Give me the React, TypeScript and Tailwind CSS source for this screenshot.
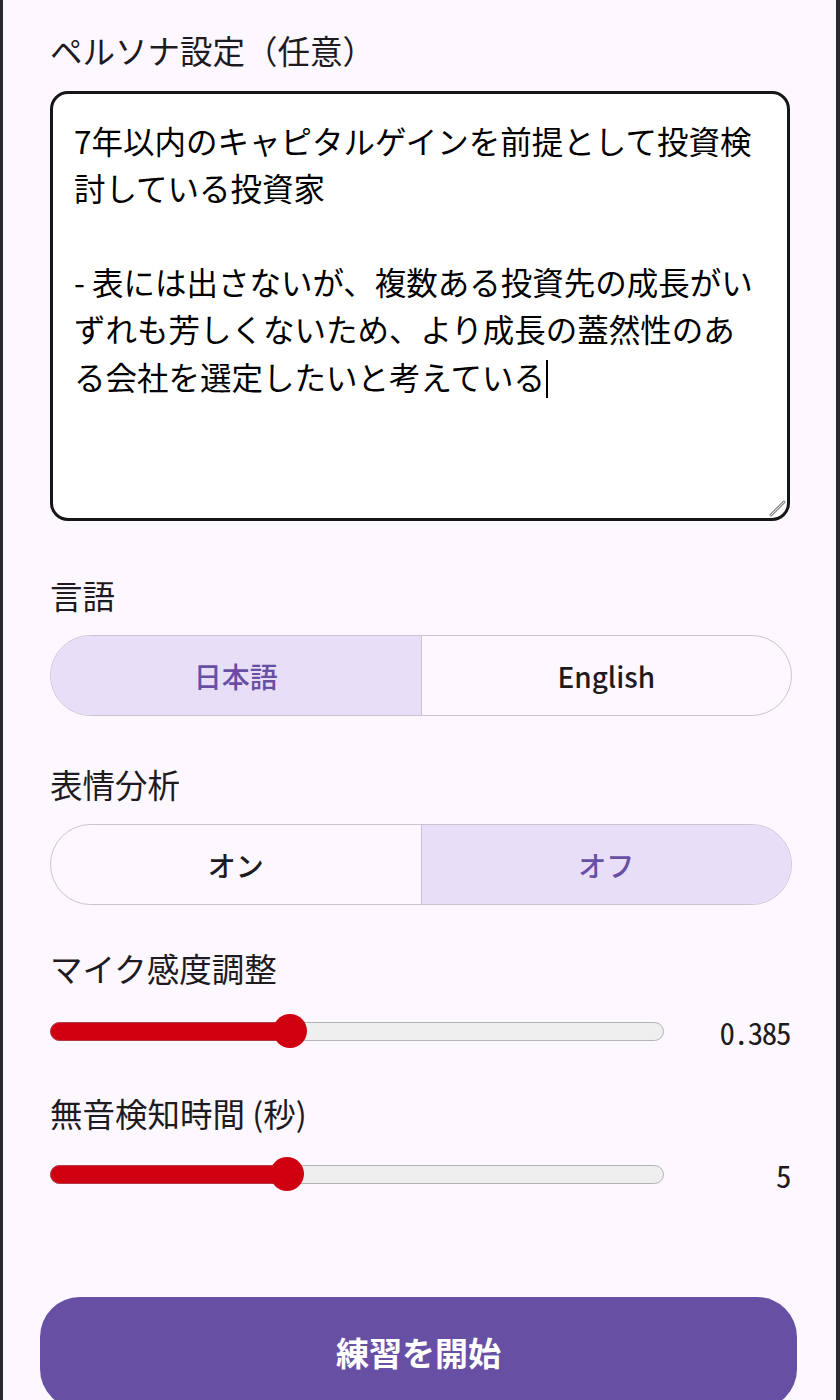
import { useState } from "react";

const FONT = { fontFamily: '"Noto Sans CJK JP", "Noto Sans", sans-serif' };

const PERSONA = [
  "7年以内のキャピタルゲインを前提として投資検",
  "討している投資家",
  "",
  "- 表には出さないが、複数ある投資先の成長がい",
  "ずれも芳しくないため、より成長の蓋然性のあ",
  "る会社を選定したいと考えている",
];

function Label({ children }: { children: React.ReactNode }) {
  return <div className="text-[32.5px] leading-[40px] text-[#1d1b20]">{children}</div>;
}

function Segmented({
  options,
  value,
  onChange,
}: {
  options: string[];
  value: number;
  onChange: (i: number) => void;
}) {
  return (
    <div className="-mr-[2px] flex h-[81px] overflow-hidden rounded-full border-[1.5px] border-[#cac4d0]">
      {options.map((opt, i) => (
        <button
          key={opt}
          onClick={() => onChange(i)}
          className={
            "flex flex-1 items-center justify-center text-[28px] font-medium " +
            (i > 0 ? "border-l-[1.5px] border-[#cac4d0] " : "") +
            (i === value ? "bg-[#e8def8] text-[#6750a4]" : "bg-transparent text-[#1d1b20]")
          }
        >
          {opt}
        </button>
      ))}
    </div>
  );
}

function Slider({ ratio, display }: { ratio: number; display: string }) {
  // thumb is 34px wide; track is 614px
  const thumbLeft = ratio * (614 - 34);
  return (
    <div className="flex h-[34px] items-center">
      <div className="relative h-[34px] w-[614px] shrink-0">
        <div className="absolute left-0 right-0 top-[8px] h-[19px] rounded-full border-[1.5px] border-[#b4b4b4] bg-[#efefef]" />
        <div
          className="absolute left-0 top-[8px] h-[19px] rounded-full border-[1.5px] border-[#b03a48] bg-[#cf0010]"
          style={{ width: thumbLeft + 20 }}
        />
        <div
          className="absolute top-0 h-[34px] w-[34px] rounded-full bg-[#cf0010]"
          style={{ left: thumbLeft }}
        />
      </div>
      <div
        className="flex-1 text-right text-[31px] leading-none tracking-[-1.4px] text-[#1d1b20]"
        style={{ fontFamily: '"Noto Sans Mono CJK JP", "Noto Sans CJK JP", monospace' }}
      >
        {display}
      </div>
    </div>
  );
}

export default function App() {
  const [lang, setLang] = useState(0);
  const [face, setFace] = useState(1);

  return (
    <div
      className="h-[1400px] overflow-hidden border-l-[3px] border-r-[4px] border-[#2a2b30] bg-[#fdf7ff]"
      style={FONT}
    >
      <div className="flex flex-col pl-[47px] pr-[46px] pt-[30px]">
        <Label>ペルソナ設定（任意）</Label>

        <div className="relative mt-[21px] h-[430px] rounded-[18px] border-[3.5px] border-[#161616] bg-white pl-[21px] pr-[16px] pt-[23px]">
          <div className="whitespace-pre text-[31.5px] leading-[47px] text-black">
            {PERSONA.map((line, i) => (
              <div key={i} className="h-[47px]">
                {line}
                {i === PERSONA.length - 1 && (
                  <span className="ml-[1px] inline-block h-[38px] w-[2px] translate-y-[8px] bg-black" />
                )}
              </div>
            ))}
          </div>
          <svg className="absolute bottom-[1px] right-[1px]" width="18" height="18" viewBox="0 0 18 18">
            <path d="M16 3 L3 16" stroke="#8a8a8a" strokeWidth="3" strokeLinecap="round" />
            <path d="M16 3 L3 16" stroke="#e6e6e6" strokeWidth="1" strokeLinecap="round" />
          </svg>
        </div>

        <div className="mt-[54px]">
          <Label>言語</Label>
        </div>
        <div className="mt-[20px]">
          <Segmented options={["日本語", "English"]} value={lang} onChange={setLang} />
        </div>

        <div className="mt-[48px]">
          <Label>表情分析</Label>
        </div>
        <div className="mt-[20px]">
          <Segmented options={["オン", "オフ"]} value={face} onChange={setFace} />
        </div>

        <div className="mt-[43px]">
          <Label>マイク感度調整</Label>
        </div>
        <div className="mt-[26px]">
          <Slider ratio={0.385} display="0.385" />
        </div>

        <div className="mt-[45px]">
          <Label>無音検知時間 (秒)</Label>
        </div>
        <div className="mt-[24px]">
          <Slider ratio={0.38} display="5" />
        </div>

        <button className="-ml-[10px] -mr-[7px] mt-[106px] h-[112px] rounded-[40px] bg-[#6750a4] text-[33px] font-bold text-white">
          練習を開始
        </button>
      </div>
    </div>
  );
}
